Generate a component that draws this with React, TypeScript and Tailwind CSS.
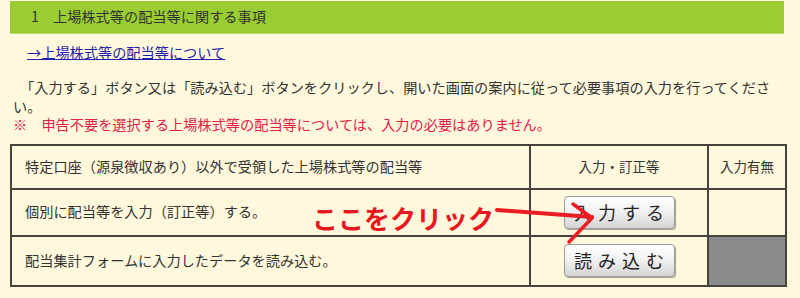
export default function App() {
  return (
    <div
      className="relative h-[298px] w-[800px] overflow-hidden bg-[#fff8dc] pt-px text-[#333]"
      style={{ fontFamily: '"Noto Sans CJK JP", "Noto Sans", sans-serif' }}
    >
      <div className="ml-[10px] flex h-[33px] w-[774px] items-center border-b border-[#b9de6a] bg-[#9acd32] pl-[21px] text-[14.2px]">
        1　上場株式等の配当等に関する事項
      </div>

      <div className="ml-[27px] mt-[9px] text-[14.2px] leading-[19px]">
        <a href="#" className="text-[#1f1fa8] underline">
          →上場株式等の配当等について
        </a>
      </div>

      <div className="ml-[13px] mt-[16px] w-[771px] text-[14.2px] leading-[18.5px]">
        <p>　「入力する」ボタン又は「読み込む」ボタンをクリックし、開いた画面の案内に従って必要事項の入力を行ってください。</p>
        <p className="text-[#e2204c]">※　申告不要を選択する上場株式等の配当等については、入力の必要はありません。</p>
      </div>

      <div className="ml-[10px] mt-[10px] w-[777px] border-2 border-[#45453e] text-[14.2px]">
        <div className="flex h-[44px] border-b-2 border-[#45453e]">
          <div className="flex w-[519px] items-center border-r-2 border-[#45453e] pl-[13px]">
            特定口座（源泉徴収あり）以外で受領した上場株式等の配当等
          </div>
          <div className="flex w-[178px] items-center justify-center border-r-2 border-[#45453e] text-[13.5px]">
            入力・訂正等
          </div>
          <div className="flex w-[76px] items-center justify-center text-[13.5px]">入力有無</div>
        </div>
        <div className="flex h-[47px] border-b-2 border-[#45453e]">
          <div className="flex w-[519px] items-center border-r-2 border-[#45453e] pl-[13px]">
            個別に配当等を入力（訂正等）する。
          </div>
          <div className="flex w-[178px] items-center justify-center border-r-2 border-[#45453e]">
            <button className="flex h-[33px] w-[111px] items-center justify-center rounded-[4px] border border-[#9a9a9a] bg-gradient-to-b from-white via-[#f0f0f0] to-[#d4d4d4] pl-[6px] text-[18px] tracking-[6px] text-[#222] shadow-[1px_1px_1px_rgba(0,0,0,0.35)]">
              入力する
            </button>
          </div>
          <div className="w-[76px]" />
        </div>
        <div className="flex h-[48px]">
          <div className="flex w-[519px] items-center border-r-2 border-[#45453e] pl-[13px]">
            配当集計フォームに入力したデータを読み込む。
          </div>
          <div className="flex w-[178px] items-center justify-center border-r-2 border-[#45453e]">
            <button className="flex h-[33px] w-[111px] items-center justify-center rounded-[4px] border border-[#9a9a9a] bg-gradient-to-b from-white via-[#f0f0f0] to-[#d4d4d4] pl-[6px] text-[18px] tracking-[6px] text-[#222] shadow-[1px_1px_1px_rgba(0,0,0,0.35)]">
              読み込む
            </button>
          </div>
          <div className="w-[76px] bg-[#8c8c8c]" />
        </div>
      </div>

      <div className="absolute left-[312px] top-[203px] text-[26px] font-bold leading-[30px] text-[#e8161e]">
        ここをクリック
      </div>
      <svg className="pointer-events-none absolute left-0 top-0" width="800" height="298">
        <g stroke="#ec1c24" strokeLinecap="round" fill="none">
          <path d="M497 210 L592 217" strokeWidth="4" />
          <path d="M573 204 L592 218 L569 242" strokeWidth="3.5" strokeLinejoin="round" />
        </g>
      </svg>
    </div>
  );
}
